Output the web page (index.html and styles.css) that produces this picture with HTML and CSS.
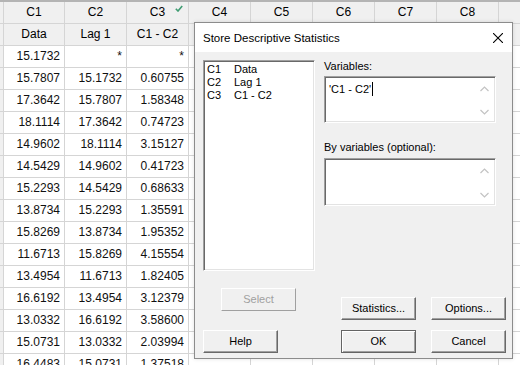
FILE: index.html
```html
<!DOCTYPE html>
<html>
<head>
<meta charset="utf-8">
<link rel="stylesheet" href="styles.css">
</head>
<body>
<div class="sheet">
  <div class="row head">
    <div class="rn"></div>
    <div class="c">C1</div>
    <div class="c">C2</div>
    <div class="c chk">C3<svg class="tick" width="8" height="7" viewBox="0 0 8 7"><path d="M0.8 3.8 L3 6 L7.2 0.9" fill="none" stroke="#3f9c72" stroke-width="1.6"/></svg></div>
    <div class="c">C4</div>
    <div class="c">C5</div>
    <div class="c">C6</div>
    <div class="c">C7</div>
    <div class="c">C8</div>
    <div class="c"></div>
  </div>
  <div class="row names">
    <div class="rn"></div>
    <div class="c">Data</div>
    <div class="c">Lag 1</div>
    <div class="c">C1 - C2</div>
    <div class="c"></div><div class="c"></div><div class="c"></div><div class="c"></div><div class="c"></div><div class="c"></div>
  </div>
  <div class="row"><div class="rn"></div><div class="n">15.1732</div><div class="n">*</div><div class="n">*</div><div class="c"></div><div class="c"></div><div class="c"></div><div class="c"></div><div class="c"></div><div class="c"></div></div>
  <div class="row"><div class="rn"></div><div class="n">15.7807</div><div class="n">15.1732</div><div class="n">0.60755</div><div class="c"></div><div class="c"></div><div class="c"></div><div class="c"></div><div class="c"></div><div class="c"></div></div>
  <div class="row"><div class="rn"></div><div class="n">17.3642</div><div class="n">15.7807</div><div class="n">1.58348</div><div class="c"></div><div class="c"></div><div class="c"></div><div class="c"></div><div class="c"></div><div class="c"></div></div>
  <div class="row"><div class="rn"></div><div class="n">18.1114</div><div class="n">17.3642</div><div class="n">0.74723</div><div class="c"></div><div class="c"></div><div class="c"></div><div class="c"></div><div class="c"></div><div class="c"></div></div>
  <div class="row"><div class="rn"></div><div class="n">14.9602</div><div class="n">18.1114</div><div class="n">3.15127</div><div class="c"></div><div class="c"></div><div class="c"></div><div class="c"></div><div class="c"></div><div class="c"></div></div>
  <div class="row"><div class="rn"></div><div class="n">14.5429</div><div class="n">14.9602</div><div class="n">0.41723</div><div class="c"></div><div class="c"></div><div class="c"></div><div class="c"></div><div class="c"></div><div class="c"></div></div>
  <div class="row"><div class="rn"></div><div class="n">15.2293</div><div class="n">14.5429</div><div class="n">0.68633</div><div class="c"></div><div class="c"></div><div class="c"></div><div class="c"></div><div class="c"></div><div class="c"></div></div>
  <div class="row"><div class="rn"></div><div class="n">13.8734</div><div class="n">15.2293</div><div class="n">1.35591</div><div class="c"></div><div class="c"></div><div class="c"></div><div class="c"></div><div class="c"></div><div class="c"></div></div>
  <div class="row"><div class="rn"></div><div class="n">15.8269</div><div class="n">13.8734</div><div class="n">1.95352</div><div class="c"></div><div class="c"></div><div class="c"></div><div class="c"></div><div class="c"></div><div class="c"></div></div>
  <div class="row"><div class="rn"></div><div class="n">11.6713</div><div class="n">15.8269</div><div class="n">4.15554</div><div class="c"></div><div class="c"></div><div class="c"></div><div class="c"></div><div class="c"></div><div class="c"></div></div>
  <div class="row"><div class="rn"></div><div class="n">13.4954</div><div class="n">11.6713</div><div class="n">1.82405</div><div class="c"></div><div class="c"></div><div class="c"></div><div class="c"></div><div class="c"></div><div class="c"></div></div>
  <div class="row"><div class="rn"></div><div class="n">16.6192</div><div class="n">13.4954</div><div class="n">3.12379</div><div class="c"></div><div class="c"></div><div class="c"></div><div class="c"></div><div class="c"></div><div class="c"></div></div>
  <div class="row"><div class="rn"></div><div class="n">13.0332</div><div class="n">16.6192</div><div class="n">3.58600</div><div class="c"></div><div class="c"></div><div class="c"></div><div class="c"></div><div class="c"></div><div class="c"></div></div>
  <div class="row"><div class="rn"></div><div class="n">15.0731</div><div class="n">13.0332</div><div class="n">2.03994</div><div class="c"></div><div class="c"></div><div class="c"></div><div class="c"></div><div class="c"></div><div class="c"></div></div>
  <div class="row"><div class="rn"></div><div class="n">16.4483</div><div class="n">15.0731</div><div class="n">1.37518</div><div class="c"></div><div class="c"></div><div class="c"></div><div class="c"></div><div class="c"></div><div class="c"></div></div>
</div>

<div class="dialog">
  <div class="titlebar">
    <span class="title">Store Descriptive Statistics</span>
    <svg class="close" width="10" height="10" viewBox="0 0 10 10"><path d="M0 0 L10 10 M10 0 L0 10" stroke="#000" stroke-width="1.1"/></svg>
  </div>
  <div class="body">
    <div class="main">
      <div class="listbox sunken">
        <div class="li"><span class="cn">C1</span><span>Data</span></div>
        <div class="li"><span class="cn">C2</span><span>Lag 1</span></div>
        <div class="li"><span class="cn">C3</span><span>C1 - C2</span></div>
      </div>
      <div class="rightcol">
        <div class="label">Variables:</div>
        <div class="tbox sunken vars">
          <div class="tval">'C1 - C2'<span class="caret"></span></div>
          <div class="sbar">
            <svg width="9" height="6" viewBox="0 0 9 6"><path d="M0.5 5 L4.5 1 L8.5 5" fill="none" stroke="#c3c3c3" stroke-width="1.2"/></svg>
            <svg width="9" height="6" viewBox="0 0 9 6"><path d="M0.5 1 L4.5 5 L8.5 1" fill="none" stroke="#c3c3c3" stroke-width="1.2"/></svg>
          </div>
        </div>
        <div class="label lab2">By variables (optional):</div>
        <div class="tbox sunken byvars">
          <div class="tval"></div>
          <div class="sbar">
            <svg width="9" height="6" viewBox="0 0 9 6"><path d="M0.5 5 L4.5 1 L8.5 5" fill="none" stroke="#c3c3c3" stroke-width="1.2"/></svg>
            <svg width="9" height="6" viewBox="0 0 9 6"><path d="M0.5 1 L4.5 5 L8.5 1" fill="none" stroke="#c3c3c3" stroke-width="1.2"/></svg>
          </div>
        </div>
      </div>
    </div>
    <div class="btnrow rowa">
      <div class="btn disabled sel">Select</div>
      <div class="btn stat">Statistics...</div>
      <div class="btn opt">Options...</div>
    </div>
    <div class="btnrow rowb">
      <div class="btn">Help</div>
      <div class="btn def ok">OK</div>
      <div class="btn opt">Cancel</div>
    </div>
  </div>
</div>
</body>
</html>
```

FILE: styles.css
```css
html, body {
  margin: 0;
  padding: 0;
  background: #ffffff;
  overflow: hidden;
}
body {
  width: 520px;
  height: 365px;
  position: relative;
  font-family: "Liberation Sans", Arial, sans-serif;
  color: #000;
}
.sheet {
  display: flex;
  flex-direction: column;
  width: 520px;
  height: 365px;
  overflow: hidden;
}
.row {
  display: grid;
  grid-template-columns: 4px 61px repeat(8, 62px);
  height: 22px;
  flex: none;
}
.row > div {
  box-sizing: border-box;
  border-right: 1px solid #d5d5d5;
  border-bottom: 1px solid #d5d5d5;
  font-size: 12px;
  line-height: 21px;
  white-space: nowrap;
  overflow: hidden;
}
.row .rn {
  background: #f0f0f0;
}
.row.head {
  height: 24px;
  border-top: 2px solid #b4b4b4;
  box-sizing: border-box;
}
.row.head > div,
.row.names > div {
  background: #f0f0f0;
  text-align: center;
}
.row.names > div {
  line-height: 20px;
}
.chk {
  position: relative;
}
.tick {
  position: absolute;
  right: 5px;
  top: 3px;
}
.n {
  text-align: right;
  padding-right: 4px;
  color: #101010;
}

.dialog {
  position: absolute;
  left: 194px;
  top: 22px;
  width: 319px;
  height: 337px;
  box-sizing: border-box;
  border: 1px solid #8c8c8c;
  background: #f0f0f0;
  display: flex;
  flex-direction: column;
  box-shadow: 0 0 4px rgba(0,0,0,0.12);
}
.titlebar {
  height: 29px;
  background: #fff;
  display: flex;
  align-items: center;
  justify-content: space-between;
  padding: 0 9px 0 8px;
  flex: none;
}
.title {
  font-size: 11.5px;
  letter-spacing: 0;
  padding-top: 1px;
}
.close {
  margin-top: 1px;
}
.body {
  padding: 8px 6px 0 8px;
  font-size: 11px;
}
.main {
  display: flex;
  gap: 9px;
  height: 211px;
}
.sunken {
  box-sizing: border-box;
  border-top: 1px solid #a0a0a0;
  border-left: 1px solid #a0a0a0;
  border-right: 1px solid #fff;
  border-bottom: 1px solid #fff;
  box-shadow: inset 1px 1px 0 #696969, inset -1px -1px 0 #e3e3e3;
  background: #fff;
}
.listbox {
  width: 112px;
  height: 211px;
  padding: 2px 3px;
}
.li {
  display: flex;
  height: 13px;
  line-height: 13px;
}
.cn {
  width: 27px;
  flex: none;
}
.rightcol {
  width: 172px;
  display: flex;
  flex-direction: column;
}
.label {
  line-height: 13px;
  height: 13px;
}
.lab2 {
  margin-top: 18px;
}
.tbox {
  display: flex;
  margin-top: 3px;
  height: 47px;
  padding: 2px;
}
.byvars {
  margin-top: 4px;
  height: 48px;
}
.tval {
  flex: 1;
  padding: 3px 2px;
  line-height: 13px;
}
.caret {
  display: inline-block;
  width: 1px;
  height: 14px;
  background: #000;
  vertical-align: -3px;
  margin-left: 1px;
}
.sbar {
  width: 17px;
  background: #fff;
  display: flex;
  flex-direction: column;
  align-items: center;
  justify-content: space-between;
  padding: 7px 0 5px;
  box-sizing: border-box;
}
.btnrow {
  display: flex;
  align-items: flex-start;
}
.rowa {
  margin-top: 17px;
  height: 32px;
}
.rowb {
  margin-top: 10px;
}
.btn {
  box-sizing: border-box;
  width: 75px;
  height: 23px;
  line-height: 21px;
  text-align: center;
  background: #f0f0f0;
  border-top: 1px solid #fff;
  border-left: 1px solid #fff;
  border-right: 1px solid #696969;
  border-bottom: 1px solid #696969;
  box-shadow: inset -1px -1px 0 #a0a0a0;
  font-size: 11px;
}
.btn.disabled {
  color: #a0a0a0;
  border-right-color: #a0a0a0;
  border-bottom-color: #a0a0a0;
  box-shadow: none;
}
.sel {
  margin-left: 18px;
}
.stat {
  margin-left: 45px;
  margin-top: 9px;
}
.opt {
  margin-left: 15px;
}
.rowa .opt {
  margin-top: 9px;
}
.ok {
  margin-left: 63px;
}
.btn.def {
  border: 1px solid #646464;
  box-shadow: inset 1px 1px 0 #fff, inset -1px -1px 0 #a0a0a0;
}
```
